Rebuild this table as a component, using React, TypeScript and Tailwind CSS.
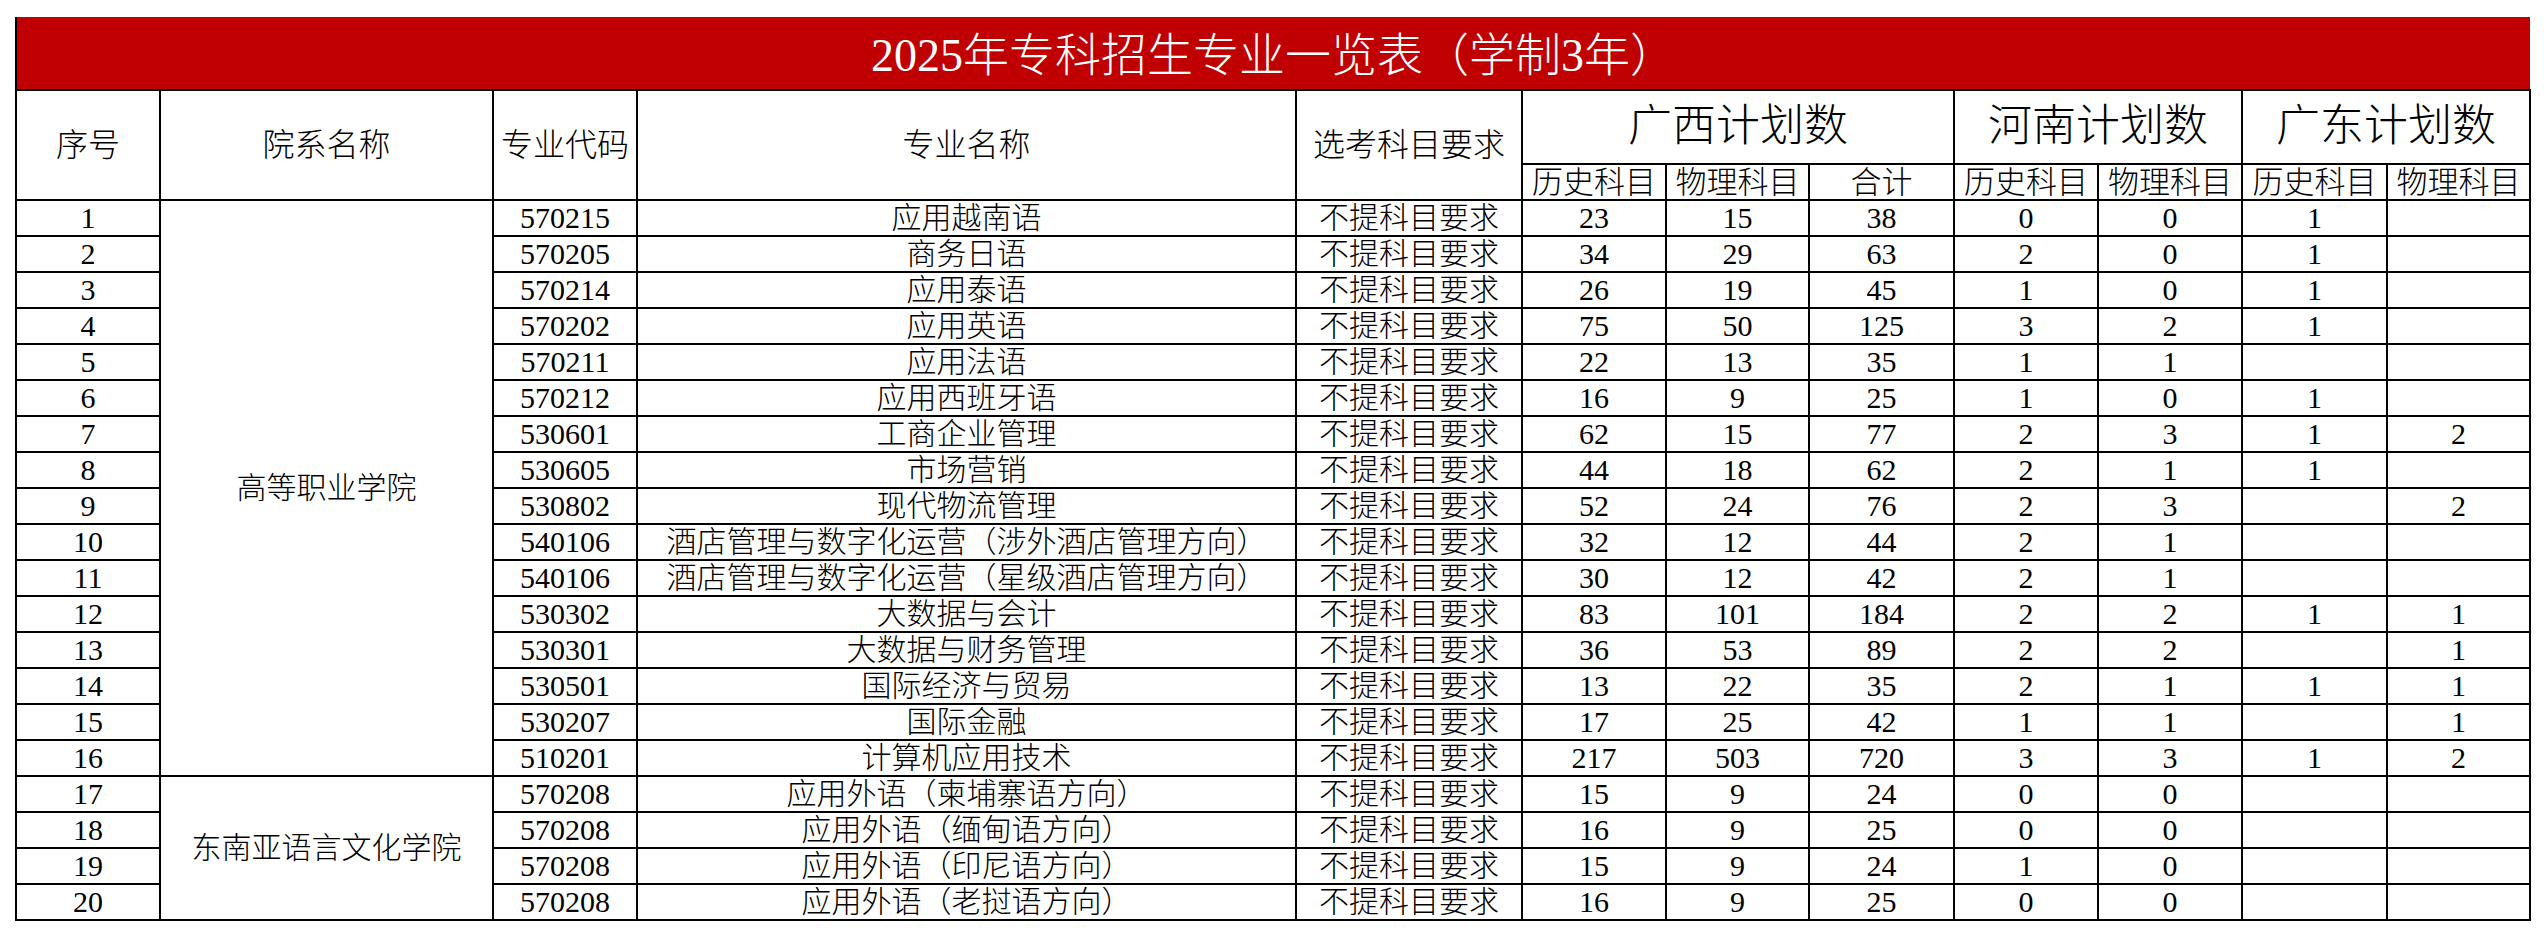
import React from "react";

type Row = {
  no: number;
  code: string;
  name: string;
  gxH: string;
  gxP: string;
  gxT: string;
  hnH: string;
  hnP: string;
  gdH: string;
  gdP: string;
};

const r = (
  no: number,
  code: string,
  name: string,
  gxH: string,
  gxP: string,
  gxT: string,
  hnH: string,
  hnP: string,
  gdH = "",
  gdP = ""
): Row => ({ no, code, name, gxH, gxP, gxT, hnH, hnP, gdH, gdP });

const rows: Row[] = [
  r(1, "570215", "应用越南语", "23", "15", "38", "0", "0", "1", ""),
  r(2, "570205", "商务日语", "34", "29", "63", "2", "0", "1", ""),
  r(3, "570214", "应用泰语", "26", "19", "45", "1", "0", "1", ""),
  r(4, "570202", "应用英语", "75", "50", "125", "3", "2", "1", ""),
  r(5, "570211", "应用法语", "22", "13", "35", "1", "1", "", ""),
  r(6, "570212", "应用西班牙语", "16", "9", "25", "1", "0", "1", ""),
  r(7, "530601", "工商企业管理", "62", "15", "77", "2", "3", "1", "2"),
  r(8, "530605", "市场营销", "44", "18", "62", "2", "1", "1", ""),
  r(9, "530802", "现代物流管理", "52", "24", "76", "2", "3", "", "2"),
  r(10, "540106", "酒店管理与数字化运营（涉外酒店管理方向）", "32", "12", "44", "2", "1", "", ""),
  r(11, "540106", "酒店管理与数字化运营（星级酒店管理方向）", "30", "12", "42", "2", "1", "", ""),
  r(12, "530302", "大数据与会计", "83", "101", "184", "2", "2", "1", "1"),
  r(13, "530301", "大数据与财务管理", "36", "53", "89", "2", "2", "", "1"),
  r(14, "530501", "国际经济与贸易", "13", "22", "35", "2", "1", "1", "1"),
  r(15, "530207", "国际金融", "17", "25", "42", "1", "1", "", "1"),
  r(16, "510201", "计算机应用技术", "217", "503", "720", "3", "3", "1", "2"),
  r(17, "570208", "应用外语（柬埔寨语方向）", "15", "9", "24", "0", "0"),
  r(18, "570208", "应用外语（缅甸语方向）", "16", "9", "25", "0", "0"),
  r(19, "570208", "应用外语（印尼语方向）", "15", "9", "24", "1", "0"),
  r(20, "570208", "应用外语（老挝语方向）", "16", "9", "25", "0", "0"),
];

const td = "border-2 border-black p-0 text-center align-middle whitespace-nowrap leading-none";

export default function App() {
  return (
    <div className="min-h-[936px] bg-white pl-[15px] pt-[17px] font-['Liberation_Serif','Noto_Sans_CJK_SC',serif] font-light text-black">
      <table className="table-fixed border-collapse w-[2514px]">
        <colgroup>
          <col className="w-[144px]" />
          <col className="w-[333px]" />
          <col className="w-[144px]" />
          <col className="w-[659px]" />
          <col className="w-[226px]" />
          <col className="w-[144px]" />
          <col className="w-[143px]" />
          <col className="w-[145px]" />
          <col className="w-[144px]" />
          <col className="w-[144px]" />
          <col className="w-[145px]" />
          <col className="w-[143px]" />
        </colgroup>
        <tbody>
          <tr className="h-[73px]">
            <td
              colSpan={12}
              className="border-l-2 border-black bg-[#C00000] p-0 pt-[6px] text-center align-middle text-[46px] leading-none text-white whitespace-nowrap"
            >
              2025年专科招生专业一览表（学制3年）
            </td>
          </tr>
          <tr className="h-[74px]">
            <td rowSpan={2} className={`${td} text-[32px]`}>序号</td>
            <td rowSpan={2} className={`${td} text-[32px]`}>院系名称</td>
            <td rowSpan={2} className={`${td} text-[32px]`}>专业代码</td>
            <td rowSpan={2} className={`${td} text-[32px]`}>专业名称</td>
            <td rowSpan={2} className={`${td} text-[32px]`}>选考科目要求</td>
            <td colSpan={3} className={`${td} text-[44px]`}>广西计划数</td>
            <td colSpan={2} className={`${td} text-[44px]`}>河南计划数</td>
            <td colSpan={2} className={`${td} text-[44px]`}>广东计划数</td>
          </tr>
          <tr className="h-[36px]">
            <td className={`${td} text-[31px]`}>历史科目</td>
            <td className={`${td} text-[31px]`}>物理科目</td>
            <td className={`${td} text-[31px]`}>合计</td>
            <td className={`${td} text-[31px]`}>历史科目</td>
            <td className={`${td} text-[31px]`}>物理科目</td>
            <td className={`${td} text-[31px]`}>历史科目</td>
            <td className={`${td} text-[31px]`}>物理科目</td>
          </tr>
          {rows.map((row) => (
            <tr key={row.no} className="h-[36px] text-[30px]">
              <td className={td}>{row.no}</td>
              {row.no === 1 && (
                <td rowSpan={16} className={td}>
                  高等职业学院
                </td>
              )}
              {row.no === 17 && (
                <td rowSpan={4} className={td}>
                  东南亚语言文化学院
                </td>
              )}
              <td className={td}>{row.code}</td>
              <td className={td}>{row.name}</td>
              <td className={td}>不提科目要求</td>
              <td className={td}>{row.gxH}</td>
              <td className={td}>{row.gxP}</td>
              <td className={td}>{row.gxT}</td>
              <td className={td}>{row.hnH}</td>
              <td className={td}>{row.hnP}</td>
              <td className={td}>{row.gdH}</td>
              <td className={td}>{row.gdP}</td>
            </tr>
          ))}
        </tbody>
      </table>
    </div>
  );
}
